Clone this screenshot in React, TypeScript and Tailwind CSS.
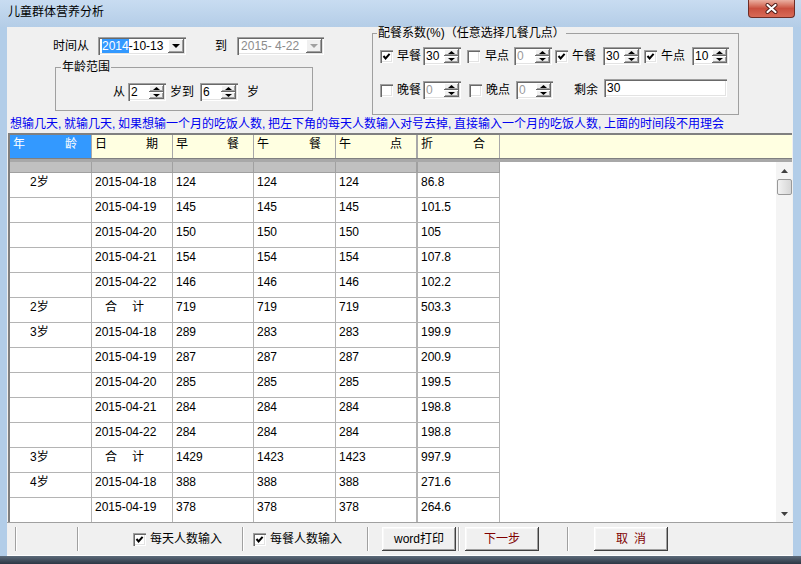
import React from "react";

const FONT = "[font-family:'Liberation_Sans','Noto_Sans_CJK_SC',sans-serif]";
const SUNKEN =
  "shadow-[inset_1px_1px_0_#a0a0a0,inset_2px_2px_0_#696969,inset_-1px_-1px_0_#ffffff,inset_-2px_-2px_0_#e3e3e3]";
const RAISED = "shadow-[inset_-1px_-1px_0_#696969,inset_1px_1px_0_#ffffff,inset_-2px_-2px_0_#a0a0a0]";
const BUTTON =
  "shadow-[inset_-1px_-1px_0_#404040,inset_1px_1px_0_#ffffff,inset_-2px_-2px_0_#a0a0a0,inset_2px_2px_0_#f8f8f8]";

const NOTE = "想输几天,就输几天,如果想输一个月的吃饭人数,把左下角的每天人数输入对号去掉,直接输入一个月的吃饭人数,上面的时间段不用理会";

type Row = [string, string, string, string, string, string];

const ROWS: Row[] = [
  ["2岁", "2015-04-18", "124", "124", "124", "86.8"],
  ["", "2015-04-19", "145", "145", "145", "101.5"],
  ["", "2015-04-20", "150", "150", "150", "105"],
  ["", "2015-04-21", "154", "154", "154", "107.8"],
  ["", "2015-04-22", "146", "146", "146", "102.2"],
  ["2岁", "合计", "719", "719", "719", "503.3"],
  ["3岁", "2015-04-18", "289", "283", "283", "199.9"],
  ["", "2015-04-19", "287", "287", "287", "200.9"],
  ["", "2015-04-20", "285", "285", "285", "199.5"],
  ["", "2015-04-21", "284", "284", "284", "198.8"],
  ["", "2015-04-22", "284", "284", "284", "198.8"],
  ["3岁", "合计", "1429", "1423", "1423", "997.9"],
  ["4岁", "2015-04-18", "388", "388", "388", "271.6"],
  ["", "2015-04-19", "378", "378", "378", "264.6"],
];

const HEAD = [
  ["年", "龄"],
  ["日", "期"],
  ["早", "餐"],
  ["午", "餐"],
  ["午", "点"],
  ["折", "合"],
];

// column widths include the 1px right grid line
const WIDTHS = ["w-[82px]", "w-[81px]", "w-[81px]", "w-[82px]", "w-[81px]", "w-[83px] border-l"];

function Tri({ up, color = "#000", w = 7, h = 4 }: { up?: boolean; color?: string; w?: number; h?: number }) {
  const pts = up ? `${w / 2},0 ${w},${h} 0,${h}` : `0,0 ${w},0 ${w / 2},${h}`;
  return (
    <svg width={w} height={h} viewBox={`0 0 ${w} ${h}`}>
      <polygon points={pts} fill={color} />
    </svg>
  );
}

function Check({ checked }: { checked?: boolean }) {
  return (
    <span className={`flex h-[13px] w-[13px] shrink-0 items-center justify-center bg-white ${SUNKEN}`}>
      {checked && (
        <svg width="9" height="9" viewBox="0 0 9 9">
          <polyline points="1.5,4 3.6,6.4 7.6,1.8" fill="none" stroke="#000" strokeWidth="2" />
        </svg>
      )}
    </span>
  );
}

function Spin({ value, w, disabled }: { value: string; w: string; disabled?: boolean }) {
  return (
    <div className={`flex h-[18px] shrink-0 bg-white p-[2px] ${SUNKEN} ${w}`}>
      <span className={`flex-1 pl-[1px] text-[12px] leading-[14px] ${disabled ? "text-[#9a9a9a]" : "text-black"}`}>
        {value}
      </span>
      <div className="flex w-[15px] flex-col">
        <div className={`flex h-[7px] items-center justify-center bg-[#f0f0f0] ${RAISED}`}>
          <Tri up w={7} h={3} />
        </div>
        <div className={`flex h-[7px] items-center justify-center bg-[#f0f0f0] ${RAISED}`}>
          <Tri w={7} h={3} />
        </div>
      </div>
    </div>
  );
}

function Combo({ children, w, disabled }: { children: React.ReactNode; w: string; disabled?: boolean }) {
  return (
    <div className={`flex h-[18px] shrink-0 bg-white p-[2px] ${SUNKEN} ${w}`}>
      <div className={`flex-1 pl-[2px] text-[12px] leading-[14px] ${disabled ? "text-[#8c8c8c]" : "text-black"}`}>
        {children}
      </div>
      <div className={`flex w-[16px] items-center justify-center bg-[#f0f0f0] ${RAISED}`}>
        <Tri w={8} h={4} color={disabled ? "#a0a0a0" : "#000"} />
      </div>
    </div>
  );
}

function Sep() {
  return <span className="h-[24px] w-[2px] shrink-0 border-l border-r border-l-[#a0a0a0] border-r-white" />;
}

function Btn({ children, red }: { children: React.ReactNode; red?: boolean }) {
  return (
    <div
      className={`flex h-[24px] w-[74px] shrink-0 items-center justify-center bg-[#f0f0f0] text-[12px] leading-[14px] ${BUTTON} ${
        red ? "text-[#800000]" : "text-black"
      }`}
    >
      {children}
    </div>
  );
}

function TitleBar() {
  return (
    <div className="flex h-[27px] justify-between bg-gradient-to-b from-[#c8dcf1] to-[#b4cde7]">
      <div className="pl-[8px] pt-[5px] text-[12px] leading-[14px] text-black">儿童群体营养分析</div>
      <div className="mr-[6px] flex h-[18px] w-[47px] items-center justify-center rounded-b-[4px] border border-t-0 border-[#6e2d26] bg-gradient-to-b from-[#eab0a2] via-[#c9503f] to-[#d86a56]">
        <svg width="13" height="11" viewBox="0 0 13 11">
          <path d="M2.5 2 L10.5 9 M10.5 2 L2.5 9" stroke="#4a1a16" strokeWidth="4" strokeLinecap="round" />
          <path d="M2.5 2 L10.5 9 M10.5 2 L2.5 9" stroke="#ffffff" strokeWidth="2.2" strokeLinecap="round" />
        </svg>
      </div>
    </div>
  );
}

function TopForm() {
  return (
    <div className="flex h-[88px] text-[12px] leading-[14px] text-black">
      {/* 左侧：时间 + 年龄范围 */}
      <div className="w-[365px] shrink-0">
        <div className="mt-[10px] flex h-[18px] items-center">
          <span className="ml-[46px]">时间从</span>
          <div className="ml-[9px]">
            <Combo w="w-[88px]">
              <span className="bg-[#3399ff] text-white">2014</span>-10-13
            </Combo>
          </div>
          <span className="ml-[29px]">到</span>
          <div className="ml-[10px]">
            <Combo w="w-[87px]" disabled>
              2015- 4-22
            </Combo>
          </div>
        </div>
        <fieldset className="ml-[48px] mt-[5px] w-[258px] border border-[#a0a0a0]">
          <legend className="ml-[5px] px-[1px] leading-[14px]">年龄范围</legend>
          <div className="mb-[9px] mt-[9px] flex h-[18px] items-center pl-[57px]">
            <span>从</span>
            <div className="ml-[3px]">
              <Spin value="2" w="w-[38px]" />
            </div>
            <span className="ml-[4px]">岁到</span>
            <div className="ml-[6px]">
              <Spin value="6" w="w-[38px]" />
            </div>
            <span className="ml-[9px]">岁</span>
          </div>
        </fieldset>
      </div>

      {/* 右侧：配餐系数 */}
      <fieldset className="w-[367px] shrink-0 border border-[#a0a0a0]">
        <legend className="ml-[4px] px-[1px] leading-[12px]">配餐系数(%)（任意选择几餐几点）</legend>
        <div className="mt-[8px] flex h-[18px] items-center">
          <span className="ml-[7px]"><Check checked /></span>
          <span className="ml-[4px]">早餐</span>
          <span className="ml-[2px]"><Spin value="30" w="w-[38px]" /></span>
          <span className="ml-[6px]"><Check /></span>
          <span className="ml-[5px]">早点</span>
          <span className="ml-[5px]"><Spin value="0" w="w-[38px]" disabled /></span>
          <span className="ml-[3px]"><Check checked /></span>
          <span className="ml-[4px]">午餐</span>
          <span className="ml-[7px]"><Spin value="30" w="w-[38px]" /></span>
          <span className="ml-[3px]"><Check checked /></span>
          <span className="ml-[4px]">午点</span>
          <span className="ml-[7px]"><Spin value="10" w="w-[37px]" /></span>
        </div>
        <div className="mb-[12px] mt-[16px] flex h-[18px] items-center">
          <span className="ml-[7px]"><Check /></span>
          <span className="ml-[4px]">晚餐</span>
          <span className="ml-[2px]"><Spin value="0" w="w-[38px]" disabled /></span>
          <span className="ml-[8px]"><Check /></span>
          <span className="ml-[4px]">晚点</span>
          <span className="ml-[6px]"><Spin value="0" w="w-[37px]" disabled /></span>
          <span className="ml-[21px]">剩余</span>
          <div className={`-mt-[4px] ml-[6px] h-[18px] w-[123px] bg-white px-[3px] py-[2px] ${SUNKEN}`}>30</div>
        </div>
      </fieldset>
    </div>
  );
}

function Grid() {
  return (
    <div className="ml-[1px] flex h-[389px] w-[784px] flex-col overflow-hidden border-l-2 border-t-2 border-[#808080] text-[12px] leading-[14px] text-black">
      <div className="flex h-[23px] shrink-0 bg-[#ffffe1]">
        {HEAD.map(([a, b], i) => (
          <div
            key={i}
            className={`flex shrink-0 items-start justify-between border-r border-[#a8a8a8] pl-[3px] pr-[14px] pt-[2px] ${WIDTHS[i]} ${
              i === 0 ? "bg-[#3399ff] text-white" : ""
            }`}
          >
            <span>{a}</span>
            <span>{b}</span>
          </div>
        ))}
      </div>
      <div className="h-[4px] shrink-0 border-t border-[#808080] bg-[#a8a8a8]" />
      <div className="flex min-h-0 flex-1">
        <div className="w-[490px] shrink-0 overflow-hidden">
          <div className="flex h-[11px] bg-[#c0c0c0]">
            {WIDTHS.map((w, i) => (
              <div key={i} className={`shrink-0 border-b border-r border-[#a0a0a0] ${w}`} />
            ))}
          </div>
          {ROWS.map((r, ri) => (
            <div key={ri} className="flex h-[25px] bg-white">
              {r.map((v, i) => (
                <div
                  key={i}
                  className={`shrink-0 border-b border-r border-[#b4b4b4] pt-[2px] ${WIDTHS[i]} ${
                    i === 0 ? "pl-[20px]" : "pl-[3px]"
                  }`}
                >
                  {v === "合计" ? (
                    <span className="pl-[10px]">
                      合<span className="ml-[15px]">计</span>
                    </span>
                  ) : (
                    v
                  )}
                </div>
              ))}
            </div>
          ))}
        </div>
        <div className="flex-1 bg-white" />
        <div className="flex w-[16px] shrink-0 flex-col bg-[#f4f4f4]">
          <div className="flex h-[17px] items-center justify-center">
            <Tri up w={7} h={4} color="#404040" />
          </div>
          <div className="mx-auto h-[16px] w-[15px] rounded-[2px] border border-[#999] bg-gradient-to-r from-[#f2f2f2] to-[#d6d6d6]" />
          <div className="flex-1" />
          <div className="flex h-[17px] items-center justify-center">
            <Tri w={7} h={4} color="#404040" />
          </div>
        </div>
      </div>
    </div>
  );
}

function BottomBar() {
  return (
    <div className="flex h-[34px] shrink-0 items-center border-b border-t border-b-white border-t-[#a0a0a0] text-[12px] leading-[14px] text-black">
      <span className="ml-[8px]" />
      <Sep />
      <span className="ml-[60px]" />
      <Sep />
      <span className="ml-[54px]"><Check checked /></span>
      <span className="ml-[4px]">每天人数输入</span>
      <span className="ml-[20px]" />
      <Sep />
      <span className="ml-[9px]"><Check checked /></span>
      <span className="ml-[4px]">每餐人数输入</span>
      <span className="ml-[25px]" />
      <Sep />
      <span className="ml-[13px]" />
      <Btn>word打印</Btn>
      <span className="ml-[2px]" />
      <Sep />
      <span className="ml-[5px]" />
      <Btn red>下一步</Btn>
      <span className="ml-[28px]" />
      <Sep />
      <span className="ml-[25px]" />
      <Btn red>
        取<span className="ml-[6px]">消</span>
      </Btn>
    </div>
  );
}

export default function App() {
  const parts = NOTE.split(",");
  return (
    <div className={`flex h-[564px] w-[801px] flex-col overflow-hidden bg-[#b2cde8] ${FONT}`}>
      <TitleBar />
      <div className="ml-[7px] flex h-[529px] w-[786px] shrink-0 flex-col bg-[#f0f0f0]">
        <TopForm />
        <div className="h-[18px] shrink-0 whitespace-nowrap pl-[3px] text-[12px] leading-[18px] text-[#0000f0]">
          {parts.map((p, i) => (
            <React.Fragment key={i}>
              {p}
              {i < parts.length - 1 && <span className="inline-block w-[6px]">,</span>}
            </React.Fragment>
          ))}
        </div>
        <Grid />
        <BottomBar />
      </div>
      <div className="flex-1 bg-gradient-to-b from-[#5d6b7a] to-[#2c3644]" />
    </div>
  );
}
